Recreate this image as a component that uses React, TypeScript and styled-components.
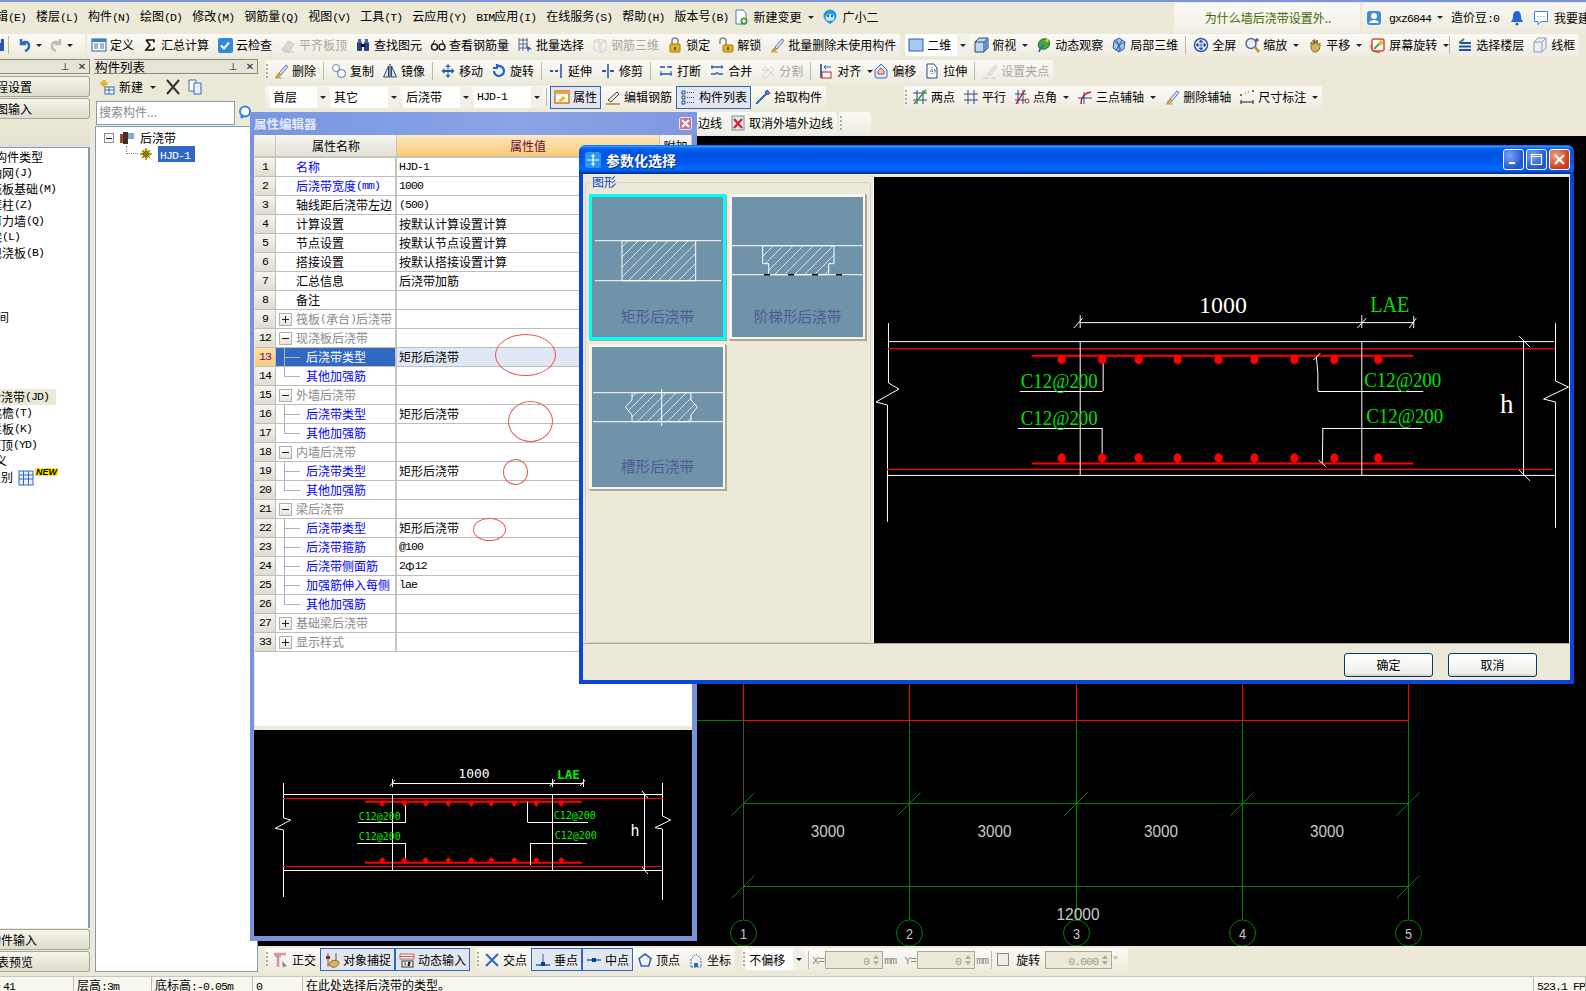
import React from 'react';
import styled, { createGlobalStyle, css } from 'styled-components';

const Global = createGlobalStyle`
  html, body { margin: 0; padding: 0; background: #ece9d8; }
  * { box-sizing: border-box; }
  body { font-family: "Noto Sans CJK SC", "Liberation Sans", sans-serif; font-size: 12px; line-height: 16px; color: #000; }
`;

const Root = styled.div`
  position: relative; width: 1586px; height: 991px; overflow: hidden;
  display: flex; flex-direction: column; background: #ece9d8;
`;
const TopEdge = styled.div`height: 2px; background: #7b96dc; flex: none;`;
const Lat = styled.span`font-family: "Liberation Mono", monospace; font-size: 11.5px; letter-spacing: -0.9px;`;
const T = ({ s }: { s: string }) => (
  <>{s.split(/([\x20-\x7e]+)/).map((p, i) => (i % 2 ? <Lat key={i}>{p}</Lat> : p))}</>
);

/* ---------- icons ---------- */
const Glyph = styled.svg`width: 16px; height: 16px; flex: none; display: block;`;
const icons: Record<string, React.ReactNode> = {
  doc: <><path d="M3 1h7l3 3v11H3z" fill="#fff" stroke="#4a7ab8" /><circle cx="11" cy="12" r="3.5" fill="#3a9a2a" /><path d="M9 12h4M11 10v4" stroke="#fff" strokeWidth="1.4" /></>,
  bot: <><circle cx="8" cy="7" r="6.5" fill="#1e9be8" /><ellipse cx="8" cy="8.5" rx="4.5" ry="3.5" fill="#bfe6fb" /><circle cx="6" cy="7" r="1" fill="#036" /><circle cx="10" cy="7" r="1" fill="#036" /><path d="M5 13l3 2 3-2" fill="#1e9be8" /></>,
  user: <><rect x="1" y="1" width="14" height="14" rx="3" fill="#3d8fd1" /><circle cx="8" cy="6" r="3" fill="#fff" /><path d="M3 13c1-4 9-4 10 0z" fill="#fff" /></>,
  bell: <><path d="M8 1c-3 0-4 3-4 6 0 3-2 4-2 5h12c0-1-2-2-2-5 0-3-1-6-4-6z" fill="#1f66d8" /><circle cx="8" cy="14" r="1.5" fill="#1f66d8" /></>,
  chat: <><path d="M1.5 1.5h13v10H8l-3 3v-3H1.5z" fill="#fff" stroke="#2f86d8" /><path d="M4.5 6.5h1M7.5 6.5h1M10.5 6.5h1" stroke="#2f86d8" /></>,
  save: <><rect x="1" y="2" width="13" height="12" fill="#2b55a8" /><rect x="4" y="2" width="7" height="4" fill="#cfdcf4" /></>,
  undo: <path d="M4 2v5h5M4 7c2-3 8-3 8 2 0 2-1 4-4 5" fill="none" stroke="#2968c8" strokeWidth="2.4" />,
  redo: <path d="M12 2v5H7M12 7c-2-3-8-3-8 2 0 2 1 4 4 5" fill="none" stroke="#bdbdb0" strokeWidth="2.4" />,
  def: <><rect x="1" y="2" width="14" height="12" fill="#fff" stroke="#2d5f9e" /><rect x="1" y="2" width="14" height="3" fill="#3d7cc0" /><path d="M3 7h4M3 9h4M3 11h4M9 7h4M9 9h4M9 11h4" stroke="#3a6aa0" /></>,
  sigma: <path d="M4 3h8v2.5M12 13H4l4-5-4-5M12 10.5V13" fill="none" stroke="#111" strokeWidth="1.6" />,
  cloud: <><rect x="1" y="1" width="15" height="15" rx="2" fill="#2f8adf" /><path d="M4 8.5l3 3 5-6" fill="none" stroke="#fff" strokeWidth="2" /></>,
  flat: <><path d="M2 13l6-9 6 3-5 8z" fill="#c8c8c8" stroke="#aaa" /><path d="M3 15h11" stroke="#aaa" /></>,
  binoc: <><rect x="2" y="5" width="5" height="9" rx="1" fill="#27408b" /><rect x="9" y="5" width="5" height="9" rx="1" fill="#27408b" /><rect x="3" y="2" width="3" height="4" fill="#4a63ad" /><rect x="10" y="2" width="3" height="4" fill="#4a63ad" /><rect x="6" y="7" width="4" height="3" fill="#111" /></>,
  glass: <><circle cx="4.5" cy="10" r="3" fill="none" stroke="#222" strokeWidth="1.5" /><circle cx="12" cy="10" r="3" fill="none" stroke="#222" strokeWidth="1.5" /><path d="M2 8l3-5M14 8l-2-5" stroke="#222" /></>,
  batch: <><path d="M2 1v13M2 3h9M2 7h9M2 11h9M6 1v13M10 1v9" stroke="#5a6a8a" fill="none" /><path d="M9 8l6 4-3 .5-1 3z" fill="#2a66c8" /></>,
  rebar3d: <path d="M2 4l5-2 7 2v9l-5 2-7-2zM7 2v11M2 4l7 2v9M14 4L9 6" fill="none" stroke="#bbb" />,
  lock: <><rect x="3" y="7" width="10" height="8" rx="1" fill="#e6b31e" stroke="#9a7a10" /><path d="M5 7V4a3 3 0 0 1 6 0v3" fill="none" stroke="#888" strokeWidth="1.5" /><rect x="7" y="10" width="2" height="3" fill="#6a4a00" /></>,
  unlock: <><rect x="5" y="8" width="10" height="7" rx="1" fill="#e6b31e" stroke="#9a7a10" /><path d="M2 7V4a3 3 0 0 1 6 0v4" fill="none" stroke="#888" strokeWidth="1.5" /><rect x="9" y="10" width="2" height="3" fill="#6a4a00" /></>,
  brush: <><path d="M6 10L13 2l2 1.5L8 12z" fill="#dde" stroke="#5577b8" /><path d="M6 10l2 2c-1 3-4 3-6 3 1-1 1-4 4-5z" fill="#d8a030" /><path d="M2 15h7" stroke="#999" /></>,
  sq2d: <rect x="1" y="2" width="14" height="12" fill="#aac7ee" stroke="#2f5fae" />,
  cube: <><path d="M2 5l4-4h9v10l-4 4H2z" fill="#bcd5f2" stroke="#345" /><path d="M2 5h9v10M11 5l4-4" fill="none" stroke="#345" /><path d="M11 5l4-4v10l-4 4z" fill="#5f91cc" /></>,
  orbit: <><ellipse cx="8" cy="7" rx="6" ry="5" transform="rotate(-35 8 7)" fill="#4ca83a" stroke="#2a6a20" /><path d="M3 15c1-4 3-6 5-7" stroke="#2a66c8" strokeWidth="1.8" fill="none" /><circle cx="11" cy="3.5" r="1.5" fill="#e8d020" /></>,
  cube3: <><path d="M8 1l6 4-1 7-5 3-6-4 1-7z" fill="#a8c4ea" stroke="#2d5fa0" /><path d="M3 4l5 4 6-3M8 8l0 7M5 2l5 11M11 3l-6 10" fill="none" stroke="#2d5fa0" /></>,
  full: <><circle cx="8" cy="8" r="6.5" fill="#e3ecf8" stroke="#3c5a9a" strokeWidth="1.5" /><path d="M8 3v10M3 8h10M8 3l-2 2h4zM8 13l-2-2h4zM3 8l2-2v4zM13 8l-2-2v4z" stroke="#2a5ab0" fill="#2a5ab0" strokeWidth=".7" /></>,
  zoom: <><circle cx="7" cy="6.5" r="5" fill="#e8eef7" stroke="#55688c" strokeWidth="1.5" /><path d="M11 10l4 5" stroke="#b89020" strokeWidth="2.4" /><path d="M13 1v4M11 3h4" stroke="#333" /></>,
  hand: <><path d="M4 9V5l2 3V3l1.5 4V2L9 7l1-4 1 5 2-2c0 4 0 9-5 9-3 0-4-3-4-6z" fill="#d9b060" stroke="#8a6a2a" /></>,
  rot: <><rect x="2" y="2" width="12" height="12" rx="2" fill="#fff" stroke="#e34a2e" strokeWidth="1.5" /><path d="M4 12l4-4 4-4" stroke="#4ca83a" strokeWidth="2" /><circle cx="11" cy="6" r="2" fill="#e8c020" /><path d="M1 8a7 7 0 0 0 9 7" stroke="#d02020" fill="none" /></>,
  floors: <><path d="M2 13h12M2 9.5h12M3 6h11" stroke="#1f4fa8" strokeWidth="2" /><path d="M2 6l5-4" stroke="#2b9a2a" strokeWidth="2" /></>,
  wire: <path d="M2 5l4-4h8v10l-4 4H2zM2 5h8v10M10 5l4-4" fill="#eef2f8" stroke="#8b9cb4" />,
  copy: <><circle cx="5" cy="5" r="3.5" fill="#fff" stroke="#6a86aa" /><circle cx="10.5" cy="10.5" r="4" fill="#fff" stroke="#3a6ab0" /></>,
  mirror: <><path d="M8 1v14" stroke="#222" /><path d="M6.5 3v11H1.5z" fill="#d6e2f2" stroke="#2a4a88" /><path d="M9.5 3v11h5z" fill="#d6e2f2" stroke="#2a4a88" /></>,
  move: <path d="M8 1l2.5 3h-2v3h3V5l3 3-3 3V9h-3v3h2L8 15l-2.5-3h2V9h-3v2l-3-3 3-3v2h3V4h-2z" fill="#2a5ab0" />,
  rotate: <path d="M3 8a5 5 0 1 0 3-4.6M6 1v4H2" fill="none" stroke="#1f63c8" strokeWidth="2.2" />,
  extend: <><path d="M1 8h3M6 8h3" stroke="#2a5ab0" strokeWidth="2" /><path d="M12 1v14" stroke="#2a5ab0" strokeWidth="1.6" /></>,
  trim: <><path d="M2 8h4M10 8h4" stroke="#2a5ab0" strokeWidth="2" /><path d="M8 1v14" stroke="#2a5ab0" strokeWidth="1.6" /></>,
  brk: <><path d="M2 4h5M9 4h5M2 11h12" stroke="#2a5ab0" strokeWidth="1.6" /><path d="M3 3l2 2M11 3l2 2" stroke="#2a5ab0" /><path d="M3 8v5M13 8v5" stroke="#2a5ab0" /></>,
  merge: <><path d="M2 11h5M9 11h5M2 4h12" stroke="#2a5ab0" strokeWidth="1.6" /><path d="M3 2v4M13 2v4M7 9l1 2 1-2" stroke="#2a5ab0" fill="none" /></>,
  split: <path d="M2 13l9-9 3 3-9 9zM2 7h7M4 3l10 10" fill="none" stroke="#bbb" />,
  align: <><path d="M3 1v14" stroke="#1e3a8a" strokeWidth="1.5" /><rect x="4" y="9" width="9" height="6" fill="#fff" stroke="#c02020" /><path d="M13 4H6l2-2M6 4l2 2" stroke="#1f63c8" fill="none" /></>,
  offset: <><path d="M8 1l6 6v6a2 2 0 0 1-2 2H4a2 2 0 0 1-2-2V7z" fill="#dde7f6" stroke="#3a6ab0" /><path d="M8 5l3 3v3H5V8z" fill="#f4c4b0" stroke="#c04a3a" /></>,
  stretch: <><path d="M3 1h7l3 4v10H3z" fill="#fff" stroke="#2a4a88" /><path d="M8 4v8M6 8h5M10 6l2 2-2 2" stroke="#2a4a88" fill="none" strokeDasharray="1 1" /></>,
  grip: <><path d="M5 11l8-9 2 2-7 9z" fill="#dedecf" stroke="#bbb" /><path d="M1 15h5M9 15h5" stroke="#aaa" /></>,
  props: <><rect x="1" y="2" width="14" height="12" fill="#fff" stroke="#d07a20" strokeWidth="1.5" /><rect x="1" y="2" width="14" height="3" fill="#f0a040" /><path d="M4 12l5-5 3 2-5 4z" fill="#e8c030" /></>,
  pencil: <><path d="M3 11L12 3l2 2-8 8z" fill="#f4f0e0" stroke="#444" /><path d="M1 15h14" stroke="#c08020" strokeWidth="1.5" /></>,
  list: <><path d="M2 2h3v3H2zM2 7h3v3H2zM2 12h3v3H2z" fill="none" stroke="#2a4a88" /><path d="M7 3.5h7M7 8.5h7M7 13.5h7" stroke="#2a4a88" strokeDasharray="1 1" /></>,
  pick: <><path d="M12 1l3 3-2 2-1-1-7 7-3 3-1-1 3-3 7-7-1-1z" fill="#3a8ad8" stroke="#1a4a88" strokeWidth=".8" /></>,
  twoPt: <><path d="M1 4h14M1 11h14M5 1v14M11 1v14" stroke="#2f4a8a" /><path d="M2 15L14 1" stroke="#2e9a2a" strokeWidth="1.4" /></>,
  para: <path d="M1 5h14M1 11h14M5 1v14M11 1v14" stroke="#2f4a8a" />,
  angle: <><path d="M1 5h11M1 11h11M4 1v14M9 1v14" stroke="#2f4a8a" /><path d="M2 15L11 1" stroke="#c02020" strokeWidth="1.3" /><circle cx="13" cy="12" r="2" fill="none" stroke="#c02020" /></>,
  arc3: <><path d="M4 15c0-6 3-11 10-12" stroke="#c02020" fill="none" strokeWidth="1.5" /><path d="M1 9h14M7 3v12" stroke="#2f4a8a" /></>,
  dim: <><path d="M2 11v4M14 11v4M2 13h12" stroke="#222" /><rect x="1" y="5" width="2" height="2" fill="#2e9a2a" /><rect x="13" y="1" width="2" height="2" fill="#2e9a2a" /><path d="M6 4h1M9 3h1" stroke="#666" /></>,
  cancel: <><rect x="2" y="1" width="12" height="14" fill="#e2e9f6" stroke="#7a8aaa" /><path d="M4 4l8 9M12 4l-8 9" stroke="#d82020" strokeWidth="2.2" /></>,
  plusNew: <><rect x="6" y="8" width="9" height="7" fill="#fff" stroke="#2a6ac0" /><path d="M6 11h9M10 8v7" stroke="#2a6ac0" /><path d="M5 1v7M1.5 4.5h7" stroke="#e6b31e" strokeWidth="3" /></>,
  del: <path d="M2 1l12 14M14 1L2 15" stroke="#333" strokeWidth="2" />,
  dup: <><path d="M2 1h7v11H2z" fill="#fff" stroke="#3a6ab0" /><path d="M7 4h7v11H7z" fill="#e4edf9" stroke="#3a6ab0" /></>,
  search: <><circle cx="7" cy="6.5" r="5" fill="#fff" stroke="#2d86dd" strokeWidth="2" /><path d="M3 13l2.5-3" stroke="#2d86dd" strokeWidth="2.6" /></>,
  beam: <><rect x="1" y="4" width="5" height="9" fill="#9a4a2a" /><rect x="4" y="2" width="5" height="12" fill="#40302a" /><path d="M9 3h6v6H9z" fill="#88a8d8" /></>,
  hub: <><circle cx="8" cy="8" r="5" fill="#f2e040" /><path d="M8 2v12M2 8h12M4 4l8 8M12 4l-8 8" stroke="#6a5a00" /><circle cx="8" cy="8" r="2.5" fill="none" stroke="#6a5a00" /></>,
  table: <><rect x="1" y="1" width="14" height="14" fill="#e9f2fc" stroke="#2f6ac0" /><path d="M5.5 1v14M10.5 1v14M1 5h14M1 9h14" stroke="#2f6ac0" /></>,
  ortho: <><path d="M1 2h12M5 2v13M2 4h6" stroke="#d89898" strokeWidth="2.6" /><path d="M9 9l5 5-2 .5-2 1z" fill="#888" /></>,
  snap: <><path d="M4 1v14M12 1v8" stroke="#8a4a4a" /><rect x="2" y="4" width="4" height="3" fill="#8a2a2a" /><path d="M5 13c0-5 7-6 10-3 0 4-4 6-7 5z" fill="#d8b060" stroke="#8a6a20" /></>,
  dyn: <><path d="M1 2h14v5H1z" fill="#f8f8f8" stroke="#c06060" /><path d="M1 4.5h14" stroke="#c06060" /><rect x="3" y="9" width="11" height="6" fill="#f4f4ee" stroke="#333" /><path d="M6 10.5v3M9 10.5h2v1.5H9v1.5h2" stroke="#111" /></>,
  cross: <path d="M2 2l12 12M14 2L2 14" stroke="#2a6ac0" strokeWidth="2" />,
  perp: <><path d="M1 13h14" stroke="#2a6ac0" strokeWidth="1.6" /><path d="M8 2v11" stroke="#2a6ac0" /><rect x="6" y="10" width="4" height="4" fill="#123a80" /></>,
  mid: <><path d="M1 8h14" stroke="#4a86d0" strokeWidth="2" /><rect x="6" y="6" width="4" height="4" fill="#123a80" /></>,
  pent: <path d="M8 2l6 4.5-2.3 7.5H4.3L2 6.5z" fill="none" stroke="#2a6ac0" strokeWidth="1.6" />,
  coord: <><path d="M3 15V7l5-5 5 5v8M3 15h10" fill="none" stroke="#2a6ac0" strokeDasharray="2 1" /><rect x="6" y="11" width="4" height="4" fill="#2a6ac0" /></>,
};
const Ico = ({ n }: { n: string }) => <Glyph viewBox="0 0 16 16">{icons[n]}</Glyph>;

/* ---------- menu ---------- */
const MenuBar = styled.div`height: 30px; display: flex; align-items: center; flex: none;`;
const MenuList = styled.div`display: flex; gap: 10px; margin-left: -16px; align-items: center;`;
const MenuItem = styled.span`white-space: nowrap; flex: none;`;
const MenuTool = styled.span<{ $ml: number }>`display: flex; align-items: center; gap: 4px; margin-left: ${p => p.$ml}px;`;
const Caret = styled.i`
  display: block; width: 0; height: 0; flex: none; margin-left: 3px;
  border-left: 3px solid transparent; border-right: 3px solid transparent; border-top: 3px solid #222;
`;
const Spacer = styled.div`flex: 1;`;
const TipTab = styled.div`
  width: 186px; height: 30px; margin-top: 1px; flex: none; display: flex; align-items: center; justify-content: center;
  color: #3c6a00; border-radius: 3px; padding-left: 2px; background: linear-gradient(#fbfaf5, #f1efe4);
`;
const UserArea = styled.div`
  width: 224px; flex: none; height: 30px; margin-top: 1px; margin-left: 2px; padding-left: 4px; display: flex; align-items: center;
  white-space: nowrap; overflow: hidden; background: linear-gradient(#f8f7f1, #eeecdf); border-radius: 3px 0 0 3px;
`;
const UserName = styled.span`margin: 0 3px 0 7px;`;
const UserBeans = styled.span`margin: 0 10px 0 8px;`;
const ChatIcon = styled.span`margin: 0 5px 0 8px;`;

/* ---------- toolbars ---------- */
const Row = styled.div<{ $pl?: number }>`
  height: 26px; flex: none; display: flex; align-items: center; padding-left: ${p => p.$pl ?? 0}px; white-space: nowrap;
`;
const Bar = styled.div<{ $ml?: number }>`
  display: flex; align-items: center; height: 23px; flex: none; margin-left: ${p => p.$ml ?? 0}px;
  border-radius: 3px; background: linear-gradient(#fbfaf6, #eeecdf);
`;
const Grip = styled.div`
  width: 3px; height: 15px; margin: 0 0 0 1px; flex: none;
  background: repeating-linear-gradient(#b0ae9f 0 2px, transparent 2px 4px) left/2px 100% no-repeat;
`;
const ToolBox = styled.div<{ $dis?: boolean; $on?: boolean; $tight?: number }>`
  display: flex; align-items: center; gap: 3px; height: 23px; padding: 0 4px; flex: none;
  margin-right: ${p => -(p.$tight ?? 0)}px;
  ${p => p.$dis && css`color: #a8a89c; svg { filter: grayscale(1); opacity: .6; }`}
  ${p => p.$on && css`box-shadow: inset 0 0 0 1px #3166c0; background: #e2e6ee;`}
`;
const Sep = styled.div`width: 1px; height: 18px; background: #bcbaaa; margin: 0 3px; flex: none;`;
const Tool = ({ i, l, dis, on, c, tight }: { i: string; l: string; dis?: boolean; on?: boolean; c?: boolean; tight?: number }) => (
  <ToolBox $dis={dis} $on={on} $tight={tight}><Ico n={i} /><span><T s={l} /></span>{c && <Caret />}</ToolBox>
);
const IconOnly = styled.div`display: flex; align-items: center; padding: 0 3px; flex: none;`;
const Combo = styled.div<{ $w: number; $ml?: number }>`
  width: ${p => p.$w}px; margin-left: ${p => p.$ml ?? 0}px; height: 21px; flex: none; background: #fff; padding-left: 3px;
  display: flex; align-items: center; justify-content: space-between;
`;
const ComboArrow = styled.span`
  width: 12px; height: 21px; background: #f1f0e8; display: flex; align-items: center; justify-content: center;
  i { margin: 0; }
`;
const ComboIcon = styled.span`display: flex; align-items: center; gap: 3px;`;
const Drop = ({ w, ml, children }: { w: number; ml?: number; children: React.ReactNode }) => (
  <Combo $w={w} $ml={ml}><ComboIcon>{children}</ComboIcon><ComboArrow><Caret /></ComboArrow></Combo>
);
const HistoryBar = styled.div`width: 85px; height: 23px; flex: none; overflow: hidden; display: flex; align-items: center; margin-right: 2px; background: linear-gradient(#fbfaf6, #eeecdf);`;
const SaveClip = styled.div`margin-left: -10px; width: 18px; flex: none;`;
const MiniSep = styled.div`width: 1px; height: 18px; background: #bcbaaa; margin-right: 5px; flex: none;`;

/* ---------- body ---------- */
const Body = styled.div`flex: 1; min-height: 0; display: flex;`;
const Dock = styled.div<{ $w: number; $mr?: number }>`
  width: ${p => p.$w}px; margin-right: ${p => p.$mr ?? 0}px; flex: none; display: flex; flex-direction: column; padding: 1px 0 4px; overflow: hidden;
`;
const DockTitle = styled.div`
  height: 15px; flex: none; display: flex; align-items: center; justify-content: flex-end; gap: 7px; padding: 0 2px 0 1px;
  border: 1px solid #8b8a80; border-left: none; background: #e6e4d6; font-size: 12.5px; line-height: 13px;
`;
const DockGap = styled.div`height: 1px; flex: none;`;
const DockName = styled.span`margin-right: auto;`;
const TitleMark = styled.span`font-family: "DejaVu Sans", sans-serif; font-size: 10px; color: #222; width: 10px; text-align: center;`;
const SideButton = styled.div`
  height: 21px; flex: none; display: flex; align-items: center; margin-top: 1px; white-space: nowrap; overflow: hidden;
  background: linear-gradient(#f6f5ec, #dedccd); border: 1px solid #a8a698; border-left: none; border-radius: 0 3px 3px 0;
`;
const SideText = styled.span<{ $indent: number }>`margin-left: ${p => p.$indent}px; flex: none;`;
const SideBand = styled.div`height: 28px; flex: none; background: linear-gradient(#ece9d8, #e2e0d0);`;
const TypeList = styled.div`
  flex: 1; min-height: 0; background: #fff; border-right: 2px solid #7f9db9; border-top: 1px solid #7f9db9; padding-top: 1px; white-space: nowrap; overflow: hidden;
`;
const TypeItem = styled.div<{ $indent: number; $hl?: boolean }>`
  height: 16px; display: flex; align-items: center; margin-left: ${p => p.$indent}px;
  ${p => p.$hl && css`background: #ece9d8; width: ${56 - p.$indent}px;`}
`;
const NewBadge = styled.span`
  font-family: "Liberation Sans", sans-serif; font-style: italic; font-weight: bold; font-size: 9px; line-height: 8px;
  background: #ffe900; height: 8px; align-self: flex-start; margin-top: -1px; padding: 0 1px;
`;
const TypeIcon = styled.span`margin: 0 1px 0 5px; padding-top: 2px;`;
const ListBar = styled.div`height: 26px; flex: none; display: flex; align-items: center; padding-left: 5px; gap: 4px;`;
const IconGap = styled.span<{ $ml: number }>`margin-left: ${p => p.$ml}px;`;
const SearchRow = styled.div`height: 25px; flex: none; display: flex; align-items: center; padding-left: 2px;`;
const SearchInput = styled.div`
  width: 139px; height: 24px; background: #fff; border: 1px solid #7f9db9; color: #8a8a8a; padding: 2px 0 0 2px; flex: none;
`;
const SearchIcon = styled.span`margin-left: 3px;`;
const Tree = styled.div`
  flex: 1; min-height: 0; margin: 1px 0 0 1px; background: #fff; border: 1px solid #7f9db9; padding-top: 3px;
`;
const TreeRow = styled.div<{ $pl: number }>`height: 16px; display: flex; align-items: center; padding-left: ${p => p.$pl}px; gap: 5px;`;
const TreeToggle = styled.span`
  width: 10px; height: 10px; border: 1px solid #7f8fa8; background: #f6f5f0; display: flex; align-items: center; justify-content: center;
  &::after { content: ""; width: 6px; height: 1px; background: #222; }
`;
const TreeDots = styled.span`width: 12px; height: 8px; margin: -8px -5px 0 0; border-left: 1px dotted #888; border-bottom: 1px dotted #888;`;
const TreeSel = styled.span`background: #3168c4; color: #fff; padding: 0 2px 0 2px; width: 37px; height: 16px; line-height: 16px; margin-left: -1px;`;

const Work = styled.div`flex: 1; min-width: 0; display: flex; flex-direction: column;`;
const Canvas = styled.div`flex: 1; min-height: 0; background: #000;`;
const FullSvg = styled.svg`display: block; width: 100%; height: 100%;`;
const BottomTools = styled.div`height: 30px; flex: none; display: flex; align-items: center; padding: 0 0 3px 7px; white-space: nowrap;`;
const BotLabel = styled.span<{ $ml?: number }>`color: #8c8c80; margin-left: ${p => p.$ml ?? 0}px; flex: none;`;
const Spin = styled.div<{ $w: number; $ml?: number }>`
  width: ${p => p.$w}px; height: 18px; flex: none; border: 1px solid #aca899; margin: 0 1px 0 ${p => p.$ml ?? 1}px; padding-right: 13px;
  color: #a0a090; text-align: right; line-height: 16px; position: relative; background: #ece9d8;
  &::before, &::after { content: ""; position: absolute; right: 3px; border-left: 3px solid transparent; border-right: 3px solid transparent; }
  &::before { top: 3px; border-bottom: 4px solid #b0ae9f; }
  &::after { bottom: 3px; border-top: 4px solid #b0ae9f; }
`;
const Check = styled.div`width: 12px; height: 13px; border: 1px solid #8a8a7c; background: #f1efe4; margin: 0 7px 0 2px; flex: none;`;

const Status = styled.div`height: 15px; flex: none; display: flex; border-top: 1px solid #c9c7b6; background: #f7f6ef; line-height: 15px; overflow: hidden;`;
const Cell = styled.div<{ $w?: number }>`
  ${p => (p.$w ? css`width: ${p.$w}px; flex: none;` : css`flex: 1;`)}
  padding-left: 3px; border-right: 1px solid #bdbbaa; white-space: nowrap; overflow: hidden;
`;

/* ---------- property window ---------- */
const PropWindow = styled.div`
  position: absolute; left: 250px; top: 112px; width: 447px; height: 829px; display: flex; flex-direction: column;
  border: 4px solid #7d90da; border-top: none; border-right-width: 5px; border-bottom-width: 5px; background: #ece9d8;
`;
const PropTitle = styled.div`
  height: 23px; flex: none; margin: 0 -5px 0 -4px; padding: 0 5px 0 4px; display: flex; align-items: center; justify-content: space-between;
  background: linear-gradient(90deg, #7795e2, #8aa4e6 60%, #7e97e0); color: #e3eaf9; font-weight: bold; font-size: 12.5px;
`;
const CloseSmall = styled.span`
  width: 13px; height: 13px; background: #c8738e; border: 1px solid #e8e0ea; border-radius: 2px; display: flex; align-items: center; justify-content: center;
`;
const PropBody = styled.div`flex: 1; min-height: 0; background: #fff; margin-left: 1px; overflow: hidden;`;
const HeadRow = styled.div`display: grid; grid-template-columns: 21px 121px 263px 1fr; height: 23px;`;
const HeadCell = styled.div<{ $hot?: boolean }>`
  display: flex; align-items: center; justify-content: center; border-right: 1px solid #c8c6b8; border-bottom: 2px solid #c8c6b8;
  background: ${p => (p.$hot ? 'linear-gradient(#fee9bf, #f8c976)' : 'linear-gradient(#f8f7f1, #e4e2d4)')};
  color: ${p => (p.$hot ? '#6a0a3a' : '#000')};
`;
const TableRow = styled.div`
  display: grid; grid-template-columns: 21px 121px 263px 1fr; height: 19px; border-bottom: 1px solid #bdbdbd;
`;
const NumCell = styled.div<{ $hot?: boolean }>`
  display: flex; align-items: center; justify-content: center; border-right: 1px solid #bdbdbd;
  background: ${p => (p.$hot ? 'linear-gradient(#fee0a6, #f9ca80)' : 'linear-gradient(#f6f5ee, #dfddce)')};
  color: ${p => (p.$hot ? '#6a0a6a' : '#000')};
`;
const NameCell = styled.div<{ $sel?: boolean; $kind: string }>`
  display: flex; align-items: center; border-right: 2px solid #c4c4c4; white-space: nowrap; overflow: hidden;
  padding-left: ${p => (p.$kind === 'field' || p.$kind === 'plain' ? 20 : 0)}px;
  color: ${p => (p.$sel ? '#fff' : p.$kind === 'group' ? '#8a8a8a' : p.$kind === 'plain' ? '#000' : '#0000ff')};
  background: ${p => (p.$sel ? '#3168c4' : 'transparent')};
`;
const ValueCell = styled.div<{ $sel?: boolean }>`
  display: flex; align-items: center; padding-left: 2px; white-space: nowrap; border-right: 1px solid #d0d0d0;
  background: ${p => (p.$sel ? '#dfe8f4' : 'transparent')};
`;
const TreeBox = styled.span<{ $minus?: boolean }>`
  width: 13px; height: 13px; margin: 0 4px 0 3px; flex: none; border: 1px solid #b0b0b0; background: linear-gradient(#fff, #e6e4da); position: relative;
  &::before { content: ""; position: absolute; left: 2px; right: 2px; top: 5px; height: 1px; background: #222; }
  ${p => !p.$minus && css`&::after { content: ""; position: absolute; top: 2px; bottom: 2px; left: 5px; width: 1px; background: #222; }`}
`;
const Branch = styled.span<{ $last?: boolean }>`
  width: 22px; margin-left: 8px; align-self: stretch; position: relative; flex: none;
  &::before { content: ""; position: absolute; left: 0; top: 0; width: 1px; background: #b0b0b0; height: ${p => (p.$last ? '50%' : '100%')}; }
  &::after { content: ""; position: absolute; left: 0; top: 50%; width: 16px; height: 1px; background: #b0b0b0; }
`;
const PreviewWrap = styled.div`height: 210px; flex: none; padding-top: 4px;`;
const Preview = styled.div`height: 206px; background: #000;`;
const Scribble = styled.div<{ $x: number; $y: number; $w: number; $h: number }>`
  position: absolute; left: ${p => p.$x}px; top: ${p => p.$y}px; width: ${p => p.$w}px; height: ${p => p.$h}px;
  border: 1px solid #ee5555; border-radius: 50%;
`;

/* ---------- dialog ---------- */
const Dialog = styled.div`
  position: absolute; left: 579px; top: 145px; width: 995px; height: 539px; display: flex; flex-direction: column;
  background: #0a46d8; padding: 0 4px 4px 4px; border-radius: 7px 7px 0 0;
`;
const DlgTitle = styled.div`
  height: 29px; flex: none; margin: 0 -4px; padding: 0 4px 0 6px; display: flex; align-items: center; gap: 5px; border-radius: 7px 7px 0 0;
  background: linear-gradient(#0058ee 0%, #3593ff 4%, #288eff 6%, #127dff 8%, #036ffc 10%, #0262ee 14%, #0057e5 20%, #0054e3 24%, #0055eb 56%, #005bf5 66%, #026afe 76%, #0062ef 86%, #0052d6 92%, #0040ab 94%, #003092 100%);
  color: #fff; font-weight: bold; font-size: 14px;
`;
const DlgIcon = styled.span`
  width: 16px; height: 16px; background: #2a97f0; border-radius: 3px; display: flex; align-items: center; justify-content: center; flex: none;
`;
const DlgName = styled.span`flex: 1; text-shadow: 1px 1px 0 #0a2a88;`;
const WinBtn = styled.span<{ $close?: boolean }>`
  width: 21px; height: 21px; border: 1px solid #fff; border-radius: 3px; flex: none; display: flex; align-items: center; justify-content: center; margin-left: -3px;
  background: ${p => (p.$close ? 'radial-gradient(circle at 30% 30%, #f0a080, #d23c14 70%)' : 'radial-gradient(circle at 30% 30%, #7aa6f4, #2355d0 70%)')};
`;
const DlgBody = styled.div`flex: 1; min-height: 0; display: flex; flex-direction: column; background: #ece9d8;`;
const DlgMain = styled.div`height: 469px; flex: none; display: flex;`;
const Group = styled.fieldset`
  width: 286px; margin: 0 2px 0 2px; padding: 4px 3px 0 3px; border: 1px solid #d4d2c2; border-radius: 4px; flex: none; min-width: 0;
  display: grid; grid-template-columns: 137px 137px; grid-auto-rows: 146px; gap: 4px 3px; align-content: start;
`;
const GroupName = styled.legend`padding: 0 1px; margin-left: 2px; color: #0046d5; line-height: 16px;`;
const Card = styled.div<{ $sel?: boolean }>`
  height: 146px; padding: ${p => (p.$sel ? '0' : '3px')}; border: ${p => (p.$sel ? '3px solid #00ffff' : '0')};
  background: #f6f5ee; box-shadow: 1px 1px 0 #aca899, inset -1px -1px 0 #aca899;
`;
const CardFace = styled.div`height: 140px; background: #6f93a9; display: flex; flex-direction: column;`;
const CardSvg = styled.svg`display: block; width: 131px; height: 106px; flex: none;`;
const CardLabel = styled.div`margin-top: 3px; text-align: center; line-height: 20px; font-size: 14.6px; color: #4e5a96;`;
const BlackView = styled.div`width: 696px; height: 466px; margin-top: 3px; flex: none; background: #000; border-left: 1px solid #fff;`;
const DlgFoot = styled.div`flex: 1; display: flex; justify-content: flex-end; align-items: center; gap: 15px; padding: 5px 33px 0 0; border-top: 1px solid #aca899;`;
const XpButton = styled.div`
  width: 89px; height: 24px; border: 1px solid #003c74; border-radius: 3px; display: flex; align-items: center; justify-content: center;
  background: linear-gradient(#fff, #f0f0ea 85%, #d6d0c5);
`;

/* ---------- svg text ---------- */
const SerifT = styled.text<{ $c?: string }>`font-family: "Liberation Serif", serif; fill: ${p => p.$c ?? '#fff'};`;
const SansT = styled.text<{ $c?: string }>`font-family: "Liberation Sans", sans-serif; fill: ${p => p.$c ?? '#c8c8c8'};`;
const MonoT = styled.text<{ $c?: string }>`font-family: "DejaVu Sans Mono", monospace; fill: ${p => p.$c ?? '#fff'};`;

const L = (a: number, b: number, c: number, d: number, k: string, s = 1) => <line key={`${a}-${b}-${c}-${d}`} x1={a} y1={b} x2={c} y2={d} stroke={k} strokeWidth={s} />;

const Rebar = ({ x, y }: { x: number; y: number }) => <path d={`M${x - 2} ${y - 4}h4l2 2v4l-2 2h-4l-2-2v-4zM${x - 1} ${y - 5}h2v10h-2z`} fill="#ff0000" />;

const BigDiagram = () => {
  const w = '#fff', r = '#ff0000', g = '#00e000';
  const tops = [1061, 1101.5, 1138, 1177, 1218, 1254, 1294, 1334, 1378];
  return (
    <FullSvg viewBox="873 177 696 466">
      <path d="M887.5 323V383L898 389 875 402 886.5 405V522" fill="none" stroke={w} />
      <path d="M1555.5 323V381L1568.5 387 1543.5 399 1555.5 402V528" fill="none" stroke={w} />
      {L(887, 341.5, 1554, 341.5, w)}{L(887, 348.5, 1555, 348.5, r, 1.2)}
      {L(1031, 355.7, 1413, 355.7, r, 2)}{L(1031, 463.7, 1413, 463.7, r, 2)}
      {L(886, 469.5, 1553, 469.5, r, 1.2)}{L(887, 475.5, 1555, 475.5, w)}
      {L(1079.5, 341, 1079.5, 475, w)}{L(1361.5, 341, 1361.5, 475, w)}
      {L(1079, 322.5, 1413, 322.5, w)}{L(1079.5, 315, 1079.5, 328, w)}{L(1361.5, 315, 1361.5, 328, w)}{L(1413.5, 316, 1413.5, 328, w)}
      {L(1073, 328, 1082, 318, w)}{L(1357, 328, 1366, 318, w)}{L(1409, 328, 1416, 318, w)}
      {L(1019, 391.5, 1102, 391.5, w)}{L(1102.5, 391, 1102.5, 356, w)}
      {L(1017, 428.5, 1102, 428.5, w)}{L(1101.5, 428, 1101.5, 457, w)}
      {L(1317.5, 391.5, 1423, 391.5, w)}{L(1317.5, 391, 1317.5, 373, w)}{L(1317.5, 373, 1316, 357, w)}{L(1313, 360, 1320, 353, w)}
      {L(1322.5, 428.5, 1422, 428.5, w)}{L(1322.5, 428, 1322, 463, w)}{L(1318, 460, 1326, 467, w)}
      {L(1523.5, 341, 1523.5, 475, w)}{L(1519, 336, 1530, 347, w)}{L(1519, 470, 1530, 481, w)}
      {tops.map(x => <Rebar key={x} x={x} y={359.5} />)}
      {tops.map(x => <Rebar key={`b${x}`} x={x} y={458} />)}
      <SerifT x={1222.5} y={313} textAnchor="middle" fontSize={24}>1000</SerifT>
      <SerifT $c={g} x={1370} y={312} fontSize={23} textLength={39} lengthAdjust="spacingAndGlyphs">LAE</SerifT>
      <SerifT $c={g} x={1020} y={388} fontSize={22} textLength={77} lengthAdjust="spacingAndGlyphs">C12@200</SerifT>
      <SerifT $c={g} x={1020} y={425} fontSize={22} textLength={77} lengthAdjust="spacingAndGlyphs">C12@200</SerifT>
      <SerifT $c={g} x={1364} y={387} fontSize={22} textLength={77} lengthAdjust="spacingAndGlyphs">C12@200</SerifT>
      <SerifT $c={g} x={1366} y={423} fontSize={22} textLength={77} lengthAdjust="spacingAndGlyphs">C12@200</SerifT>
      <SerifT x={1500} y={413} fontSize={27}>h</SerifT>
    </FullSvg>
  );
};

const SmallDiagram = () => {
  const w = '#fff', r = '#ff0000', g = '#00f000';
  const dots = [382.3, 404.3, 425.7, 448.3, 471.3, 491.3, 514.3, 536.3, 561.3];
  return (
    <FullSvg viewBox="254 729 438 206">
      <path d="M283.5 782V817L290.7 819 275.3 827.3 283.5 829V896" fill="none" stroke={w} />
      <path d="M662.5 782V815L670.7 819 655 826.7 662.5 828V899" fill="none" stroke={w} />
      {L(283, 793.5, 662, 793.5, w)}{L(283, 797.5, 663, 797.5, r)}
      {L(365, 800.7, 582, 800.7, r, 2)}{L(365, 861.7, 582, 861.7, r, 2)}
      {L(282, 865.5, 661, 865.5, r)}{L(283, 869.5, 662, 869.5, w)}
      {L(392.5, 793, 392.5, 870, w)}{L(552.5, 793, 552.5, 870, w)}
      {L(392, 782.5, 583, 782.5, w)}{L(390, 785, 395, 779, w)}{L(550, 785, 555, 779, w)}{L(580, 785, 585, 779, w)}
      {L(392.5, 778, 392.5, 786, w)}{L(552.5, 778, 552.5, 786, w)}{L(583.5, 778, 583.5, 786, w)}
      {L(358, 821.5, 406, 821.5, w)}{L(405.5, 821, 405.5, 801, w)}
      {L(357, 842.5, 406, 842.5, w)}{L(405.5, 842, 405.5, 861, w)}
      {L(527.5, 821.5, 588, 821.5, w)}{L(527.5, 821, 527.5, 801, w)}
      {L(530.5, 842.5, 587, 842.5, w)}{L(530.5, 842, 530.5, 864, w)}
      {L(644.5, 793, 644.5, 870, w)}{L(642, 790, 648, 797, w)}{L(642, 866, 648, 873, w)}
      {dots.map(x => <path key={x} d={`M${x - 3} 802L${x} 799 ${x + 3} 802 ${x} 806z`} fill={r} />)}
      {dots.map(x => <path key={`b${x}`} d={`M${x - 3} 859L${x} 856 ${x + 3} 859 ${x} 863z`} fill={r} />)}
      <MonoT x={474} y={777} textAnchor="middle" fontSize={13}>1000</MonoT>
      <MonoT $c={g} x={557} y={778} fontSize={12} fontWeight="bold" textLength={23} lengthAdjust="spacingAndGlyphs">LAE</MonoT>
      <MonoT $c={g} x={358.7} y={819} fontSize={11} textLength={42} lengthAdjust="spacingAndGlyphs">C12@200</MonoT>
      <MonoT $c={g} x={358.7} y={839} fontSize={11} textLength={42} lengthAdjust="spacingAndGlyphs">C12@200</MonoT>
      <MonoT $c={g} x={553.7} y={818} fontSize={11} textLength={42} lengthAdjust="spacingAndGlyphs">C12@200</MonoT>
      <MonoT $c={g} x={554.7} y={838} fontSize={11} textLength={42} lengthAdjust="spacingAndGlyphs">C12@200</MonoT>
      <MonoT x={635} y={835} textAnchor="middle" fontSize={15}>h</MonoT>
    </FullSvg>
  );
};

const Plan = () => {
  const g = '#008000', r = '#ff0000';
  const xs = [743.5, 909.5, 1076.5, 1242.5, 1408.5];
  const slash = (x: number, y: number) => L(x - 12, y + 12, x + 11, y - 11, g);
  return (
    <FullSvg viewBox="258 136 1328 810">
      {xs.map((x, i) => <React.Fragment key={x}>
        {L(x, 684, x, 720, r)}
        {L(x, 720, x, 920, i ? g : '#4c4c40')}
        <circle cx={x} cy={933} r={13} fill="none" stroke={g} />
        <SansT x={x} y={938.5} textAnchor="middle" fontSize={15} textLength={7} lengthAdjust="spacingAndGlyphs">{i + 1}</SansT>
      </React.Fragment>)}
      {L(696, 720.5, 743, 720.5, g, 1.2)}{L(743, 720.5, 1408, 720.5, r, 1.2)}
      {L(743, 803.5, 1408, 803.5, g)}{L(743, 886.5, 1408, 886.5, g)}
      {xs.map(x => <React.Fragment key={`s${x}`}>{slash(x, 803.5)}</React.Fragment>)}
      {slash(743.5, 886.5)}{slash(1408.5, 886.5)}
      {[827.7, 994.6, 1161, 1327].map(x => <SansT key={x} x={x} y={837} textAnchor="middle" fontSize={17} textLength={34} lengthAdjust="spacingAndGlyphs">3000</SansT>)}
      <SansT x={1078} y={920} textAnchor="middle" fontSize={17} textLength={43} lengthAdjust="spacingAndGlyphs">12000</SansT>
    </FullSvg>
  );
};

const Hatch = ({ id, d }: { id: string; d: string }) => (
  <>
    <defs>
      <pattern id={id} width="10" height="10" patternUnits="userSpaceOnUse">
        <path d="M-1 11L11 -1M-1 1L1 -1M9 11L11 9" stroke="#fff" strokeWidth=".9" strokeDasharray="2.6 .5" />
      </pattern>
    </defs>
    <path d={d} fill={`url(#${id})`} stroke="#fff" />
  </>
);

type R = { n: number; name: string; kind: 'field' | 'plain' | 'group' | 'child'; v?: string; open?: boolean; last?: boolean; sel?: boolean };
const rows: R[] = [
  { n: 1, name: '名称', kind: 'field', v: 'HJD-1' },
  { n: 2, name: '后浇带宽度(mm)', kind: 'field', v: '1000' },
  { n: 3, name: '轴线距后浇带左边', kind: 'plain', v: '(500)' },
  { n: 4, name: '计算设置', kind: 'plain', v: '按默认计算设置计算' },
  { n: 5, name: '节点设置', kind: 'plain', v: '按默认节点设置计算' },
  { n: 6, name: '搭接设置', kind: 'plain', v: '按默认搭接设置计算' },
  { n: 7, name: '汇总信息', kind: 'plain', v: '后浇带加筋' },
  { n: 8, name: '备注', kind: 'plain' },
  { n: 9, name: '筏板(承台)后浇带', kind: 'group' },
  { n: 12, name: '现浇板后浇带', kind: 'group', open: true },
  { n: 13, name: '后浇带类型', kind: 'child', v: '矩形后浇带', sel: true },
  { n: 14, name: '其他加强筋', kind: 'child', last: true },
  { n: 15, name: '外墙后浇带', kind: 'group', open: true },
  { n: 16, name: '后浇带类型', kind: 'child', v: '矩形后浇带' },
  { n: 17, name: '其他加强筋', kind: 'child', last: true },
  { n: 18, name: '内墙后浇带', kind: 'group', open: true },
  { n: 19, name: '后浇带类型', kind: 'child', v: '矩形后浇带' },
  { n: 20, name: '其他加强筋', kind: 'child', last: true },
  { n: 21, name: '梁后浇带', kind: 'group', open: true },
  { n: 22, name: '后浇带类型', kind: 'child', v: '矩形后浇带' },
  { n: 23, name: '后浇带箍筋', kind: 'child', v: '@100' },
  { n: 24, name: '后浇带侧面筋', kind: 'child', v: '2 Φ12' },
  { n: 25, name: '加强筋伸入每侧', kind: 'child', v: 'lae' },
  { n: 26, name: '其他加强筋', kind: 'child', last: true },
  { n: 27, name: '基础梁后浇带', kind: 'group' },
  { n: 33, name: '显示样式', kind: 'group' },
];

const types: [string, number, boolean?][] = [
  ['构件类型', -5], ['轴网(J)', -10], ['筏板基础(M)', -10], ['框柱(Z)', -10], ['剪力墙(Q)', -10], ['梁(L)', -10], ['现浇板(B)', -10],
  ['', 0], ['', 0], ['', 0], ['房间', -15], ['', 0], ['', 0], ['', 0], ['', 0],
  ['后浇带(JD)', -11, true], ['挑檐(T)', -10], ['栏板(K)', -10], ['压顶(YD)', -11], ['自定义', -29], ['识别', -11],
];
const menus = ['编辑(E)', '楼层(L)', '构件(N)', '绘图(D)', '修改(M)', '钢筋量(Q)', '视图(V)', '工具(T)', '云应用(Y)', 'BIM应用(I)', '在线服务(S)', '帮助(H)', '版本号(B)'];

export default function App() {
  return (
    <Root>
      <Global />
      <TopEdge />
      <MenuBar>
        <MenuList>
          {menus.map(m => <MenuItem key={m}><T s={m} /></MenuItem>)}
          <MenuTool $ml={-5}><Ico n="doc" /><span>新建变更</span><Caret /></MenuTool>
          <MenuTool $ml={-2}><Ico n="bot" /><span>广小二</span></MenuTool>
        </MenuList>
        <Spacer />
        <TipTab>为什么墙后浇带设置外..</TipTab>
        <UserArea>
          <Ico n="user" /><UserName><T s="gxz6844" /></UserName><Caret />
          <UserBeans><T s="造价豆:0" /></UserBeans><Ico n="bell" /><ChatIcon><Ico n="chat" /></ChatIcon>我要建议
        </UserArea>
      </MenuBar>
      <Row>
        <HistoryBar>
          <SaveClip><Ico n="save" /></SaveClip><MiniSep />
          <IconOnly><Ico n="undo" /><Caret /></IconOnly><IconOnly><Ico n="redo" /><Caret /></IconOnly>
        </HistoryBar>
        <Bar>
          <Tool i="def" l="定义" /><Tool i="sigma" l="汇总计算" /><Tool i="cloud" l="云检查" /><Tool i="flat" l="平齐板顶" dis />
          <Tool i="binoc" l="查找图元" /><Tool i="glass" l="查看钢筋量" /><Tool i="batch" l="批量选择" /><Tool i="rebar3d" l="钢筋三维" dis />
          <Tool i="lock" l="锁定" /><Tool i="unlock" l="解锁" /><Tool i="brush" l="批量删除未使用构件" />
        </Bar>
        <Bar $ml={5}>
          <Drop w={64}><Ico n="sq2d" />二维</Drop>
          <Tool i="cube" l="俯视" c /><Tool i="orbit" l="动态观察" /><Tool i="cube3" l="局部三维" /><Sep />
          <Tool i="full" l="全屏" /><Tool i="zoom" l="缩放" c /><Tool i="hand" l="平移" c /><Tool i="rot" l="屏幕旋转" c tight={7} /><Sep />
          <Tool i="floors" l="选择楼层" /><Tool i="wire" l="线框" />
        </Bar>
      </Row>
      <Body>
        <Dock $w={90} $mr={4}>
          <DockTitle><TitleMark>⊥</TitleMark><TitleMark>✕</TitleMark></DockTitle>
          <DockGap />
          <SideButton><SideText $indent={-16}>工程设置</SideText></SideButton>
          <SideButton><SideText $indent={-16}>绘图输入</SideText></SideButton>
          <SideBand />
          <TypeList>
            {types.map(([t, ind, hl], i) => (
              <TypeItem key={i} $indent={ind} $hl={hl}>
                <T s={t} />{t === '识别' && <><TypeIcon><Ico n="table" /></TypeIcon><NewBadge>NEW</NewBadge></>}
              </TypeItem>
            ))}
          </TypeList>
          <SideButton><SideText $indent={-11}>构件输入</SideText></SideButton>
          <SideButton><SideText $indent={-15}>报表预览</SideText></SideButton>
        </Dock>
        <Dock $w={164}>
          <DockTitle><DockName>构件列表</DockName><TitleMark>⊥</TitleMark><TitleMark>✕</TitleMark></DockTitle>
          <ListBar>
            <Ico n="plusNew" /><span>新建</span><Caret />
            <IconGap $ml={5}><Ico n="del" /></IconGap><IconGap $ml={2}><Ico n="dup" /></IconGap>
          </ListBar>
          <SearchRow><SearchInput>搜索构件...</SearchInput><SearchIcon><Ico n="search" /></SearchIcon></SearchRow>
          <Tree>
            <TreeRow $pl={8}><TreeToggle /><Ico n="beam" />后浇带</TreeRow>
            <TreeRow $pl={30}><TreeDots /><Ico n="hub" /><TreeSel><T s="HJD-1" /></TreeSel></TreeRow>
          </Tree>
        </Dock>
        <Work>
          <Row $pl={7}>
            <Bar>
              <Grip />
              <Tool i="brush" l="删除" /><Sep /><Tool i="copy" l="复制" /><Tool i="mirror" l="镜像" /><Sep />
              <Tool i="move" l="移动" /><Tool i="rotate" l="旋转" /><Sep /><Tool i="extend" l="延伸" /><Tool i="trim" l="修剪" /><Sep />
              <Tool i="brk" l="打断" /><Tool i="merge" l="合并" /><Tool i="split" l="分割" dis /><Sep />
              <Tool i="align" l="对齐" c tight={8} /><Tool i="offset" l="偏移" /><Tool i="stretch" l="拉伸" /><Sep />
              <Tool i="grip" l="设置夹点" dis />
            </Bar>
          </Row>
          <Row $pl={7}>
            <Bar>
              <Drop w={59} ml={5}>首层</Drop><Drop w={69} ml={2}>其它</Drop><Drop w={69} ml={3}>后浇带</Drop><Drop w={69} ml={2}><T s="HJD-1" /></Drop>
              <Sep />
              <Tool i="props" l="属性" on /><Tool i="pencil" l="编辑钢筋" /><Tool i="list" l="构件列表" on /><Tool i="pick" l="拾取构件" />
            </Bar>
            <Bar $ml={78}>
              <Grip /><Tool i="twoPt" l="两点" /><Tool i="para" l="平行" /><Tool i="angle" l="点角" c /><Tool i="arc3" l="三点辅轴" c />
              <Tool i="brush" l="删除辅轴" /><Tool i="dim" l="尺寸标注" c />
            </Bar>
          </Row>
          <Row $pl={381}>
            <Bar>
              <Tool i="cancel" l="设置外边线" /><Tool i="cancel" l="取消外墙外边线" />
            </Bar>
            <Bar $ml={2}><Grip /><Spacer /><IconGap $ml={28} /></Bar>
          </Row>
          <Canvas><Plan /></Canvas>
          <BottomTools>
            <Bar>
              <Grip /><Tool i="ortho" l="正交" /><Tool i="snap" l="对象捕捉" on /><Tool i="dyn" l="动态输入" on />
            </Bar>
            <Bar $ml={6}>
              <Grip /><Tool i="cross" l="交点" /><Tool i="perp" l="垂点" on /><Tool i="mid" l="中点" on /><Tool i="pent" l="顶点" /><Tool i="coord" l="坐标" />
            </Bar>
            <Bar $ml={7}>
              <Grip /><Drop w={59}>不偏移</Drop><Sep />
              <BotLabel><T s="X=" /></BotLabel><Spin $w={58}><T s="0" /></Spin><BotLabel><T s="mm" /></BotLabel>
              <BotLabel $ml={8}><T s="Y=" /></BotLabel><Spin $w={58}><T s="0" /></Spin><BotLabel><T s="mm" /></BotLabel>
              <Sep /><Check />旋转<Spin $w={67} $ml={5}><T s="0.000" /></Spin><BotLabel><T s="°" /></BotLabel><IconGap $ml={10} />
            </Bar>
          </BottomTools>
        </Work>
      </Body>
      <Status>
        <Cell $w={74}><T s="41" /></Cell>
        <Cell $w={78}><T s="层高:3m" /></Cell>
        <Cell $w={101}><T s="底标高:-0.05m" /></Cell>
        <Cell $w={50}><T s="0" /></Cell>
        <Cell>在此处选择后浇带的类型。</Cell>
        <Cell $w={52}><T s="523.1 FPS" /></Cell>
      </Status>

      <PropWindow>
        <PropTitle>
          <span>属性编辑器</span>
          <CloseSmall><svg width="9" height="9" viewBox="0 0 9 9"><path d="M1 1l7 7M8 1L1 8" stroke="#fff" strokeWidth="2" /></svg></CloseSmall>
        </PropTitle>
        <PropBody>
          <HeadRow><HeadCell /><HeadCell>属性名称</HeadCell><HeadCell $hot>属性值</HeadCell><HeadCell>附加</HeadCell></HeadRow>
          {rows.map(r => (
            <TableRow key={r.n}>
              <NumCell $hot={r.sel}><T s={String(r.n)} /></NumCell>
              <NameCell $kind={r.kind} $sel={r.sel}>
                {r.kind === 'group' && <TreeBox $minus={r.open} />}
                {r.kind === 'child' && <Branch $last={r.last} />}
                <T s={r.name} />
              </NameCell>
              <ValueCell $sel={r.sel}><T s={r.v ?? ''} /></ValueCell>
              <ValueCell />
            </TableRow>
          ))}
        </PropBody>
        <PreviewWrap><Preview><SmallDiagram /></Preview></PreviewWrap>
      </PropWindow>
      <Scribble $x={495} $y={334} $w={61} $h={42} />
      <Scribble $x={508} $y={401} $w={45} $h={41} />
      <Scribble $x={503} $y={459} $w={25} $h={26} />
      <Scribble $x={473} $y={518} $w={33} $h={23} />

      <Dialog>
        <DlgTitle>
          <DlgIcon><svg width="12" height="12" viewBox="0 0 12 12"><path d="M6 0v12M0 6h12M4 2h4M4 10h4" stroke="#fff" strokeWidth="1.2" /></svg></DlgIcon>
          <DlgName>参数化选择</DlgName>
          <WinBtn><svg width="11" height="11" viewBox="0 0 11 11"><path d="M1 9h6" stroke="#fff" strokeWidth="2" /></svg></WinBtn>
          <WinBtn><svg width="13" height="13" viewBox="0 0 13 13"><path d="M1.5 1.5h10v10h-10z M1.5 3.5h10" fill="none" stroke="#fff" strokeWidth="1.2" /></svg></WinBtn>
          <WinBtn $close><svg width="13" height="13" viewBox="0 0 13 13"><path d="M2 2l9 9M11 2l-9 9" stroke="#fff" strokeWidth="2.2" /></svg></WinBtn>
        </DlgTitle>
        <DlgBody>
          <DlgMain>
            <Group>
              <GroupName>图形</GroupName>
              <Card $sel>
                <CardFace>
                  <CardSvg viewBox="0 0 131 106">
                    <path d="M3 43.7H129M3 83.7H129" stroke="#fff" />
                    <Hatch id="h1" d="M30 43.7H103.7V83.7H30z" />
                  </CardSvg>
                  <CardLabel>矩形后浇带</CardLabel>
                </CardFace>
              </Card>
              <Card>
                <CardFace>
                  <CardSvg viewBox="0 0 131 106">
                    <path d="M0 48.7H131M0 77.7H131" stroke="#fff" />
                    <Hatch id="h2" d="M30.7 48.7H102V66.7H96.7V77.7H36.7V66.7H30.7z" />
                    <path d="M32 77.7h6M56 77.7h6M80 77.7h6M104 77.7h6" stroke="#000" strokeWidth="1.4" />
                  </CardSvg>
                  <CardLabel>阶梯形后浇带</CardLabel>
                </CardFace>
              </Card>
              <Card>
                <CardFace>
                  <CardSvg viewBox="0 0 131 106">
                    <path d="M1 45.7H131M1 74.7H131" stroke="#fff" />
                    <Hatch id="h3" d="M40 45.7H99V53L105.3 60 99 68V74.7H40V68L33.3 60 40 53z" />
                    <path d="M69.7 42V79" stroke="#fff" />
                  </CardSvg>
                  <CardLabel>槽形后浇带</CardLabel>
                </CardFace>
              </Card>
            </Group>
            <BlackView><BigDiagram /></BlackView>
          </DlgMain>
          <DlgFoot><XpButton>确定</XpButton><XpButton>取消</XpButton></DlgFoot>
        </DlgBody>
      </Dialog>
    </Root>
  );
}
